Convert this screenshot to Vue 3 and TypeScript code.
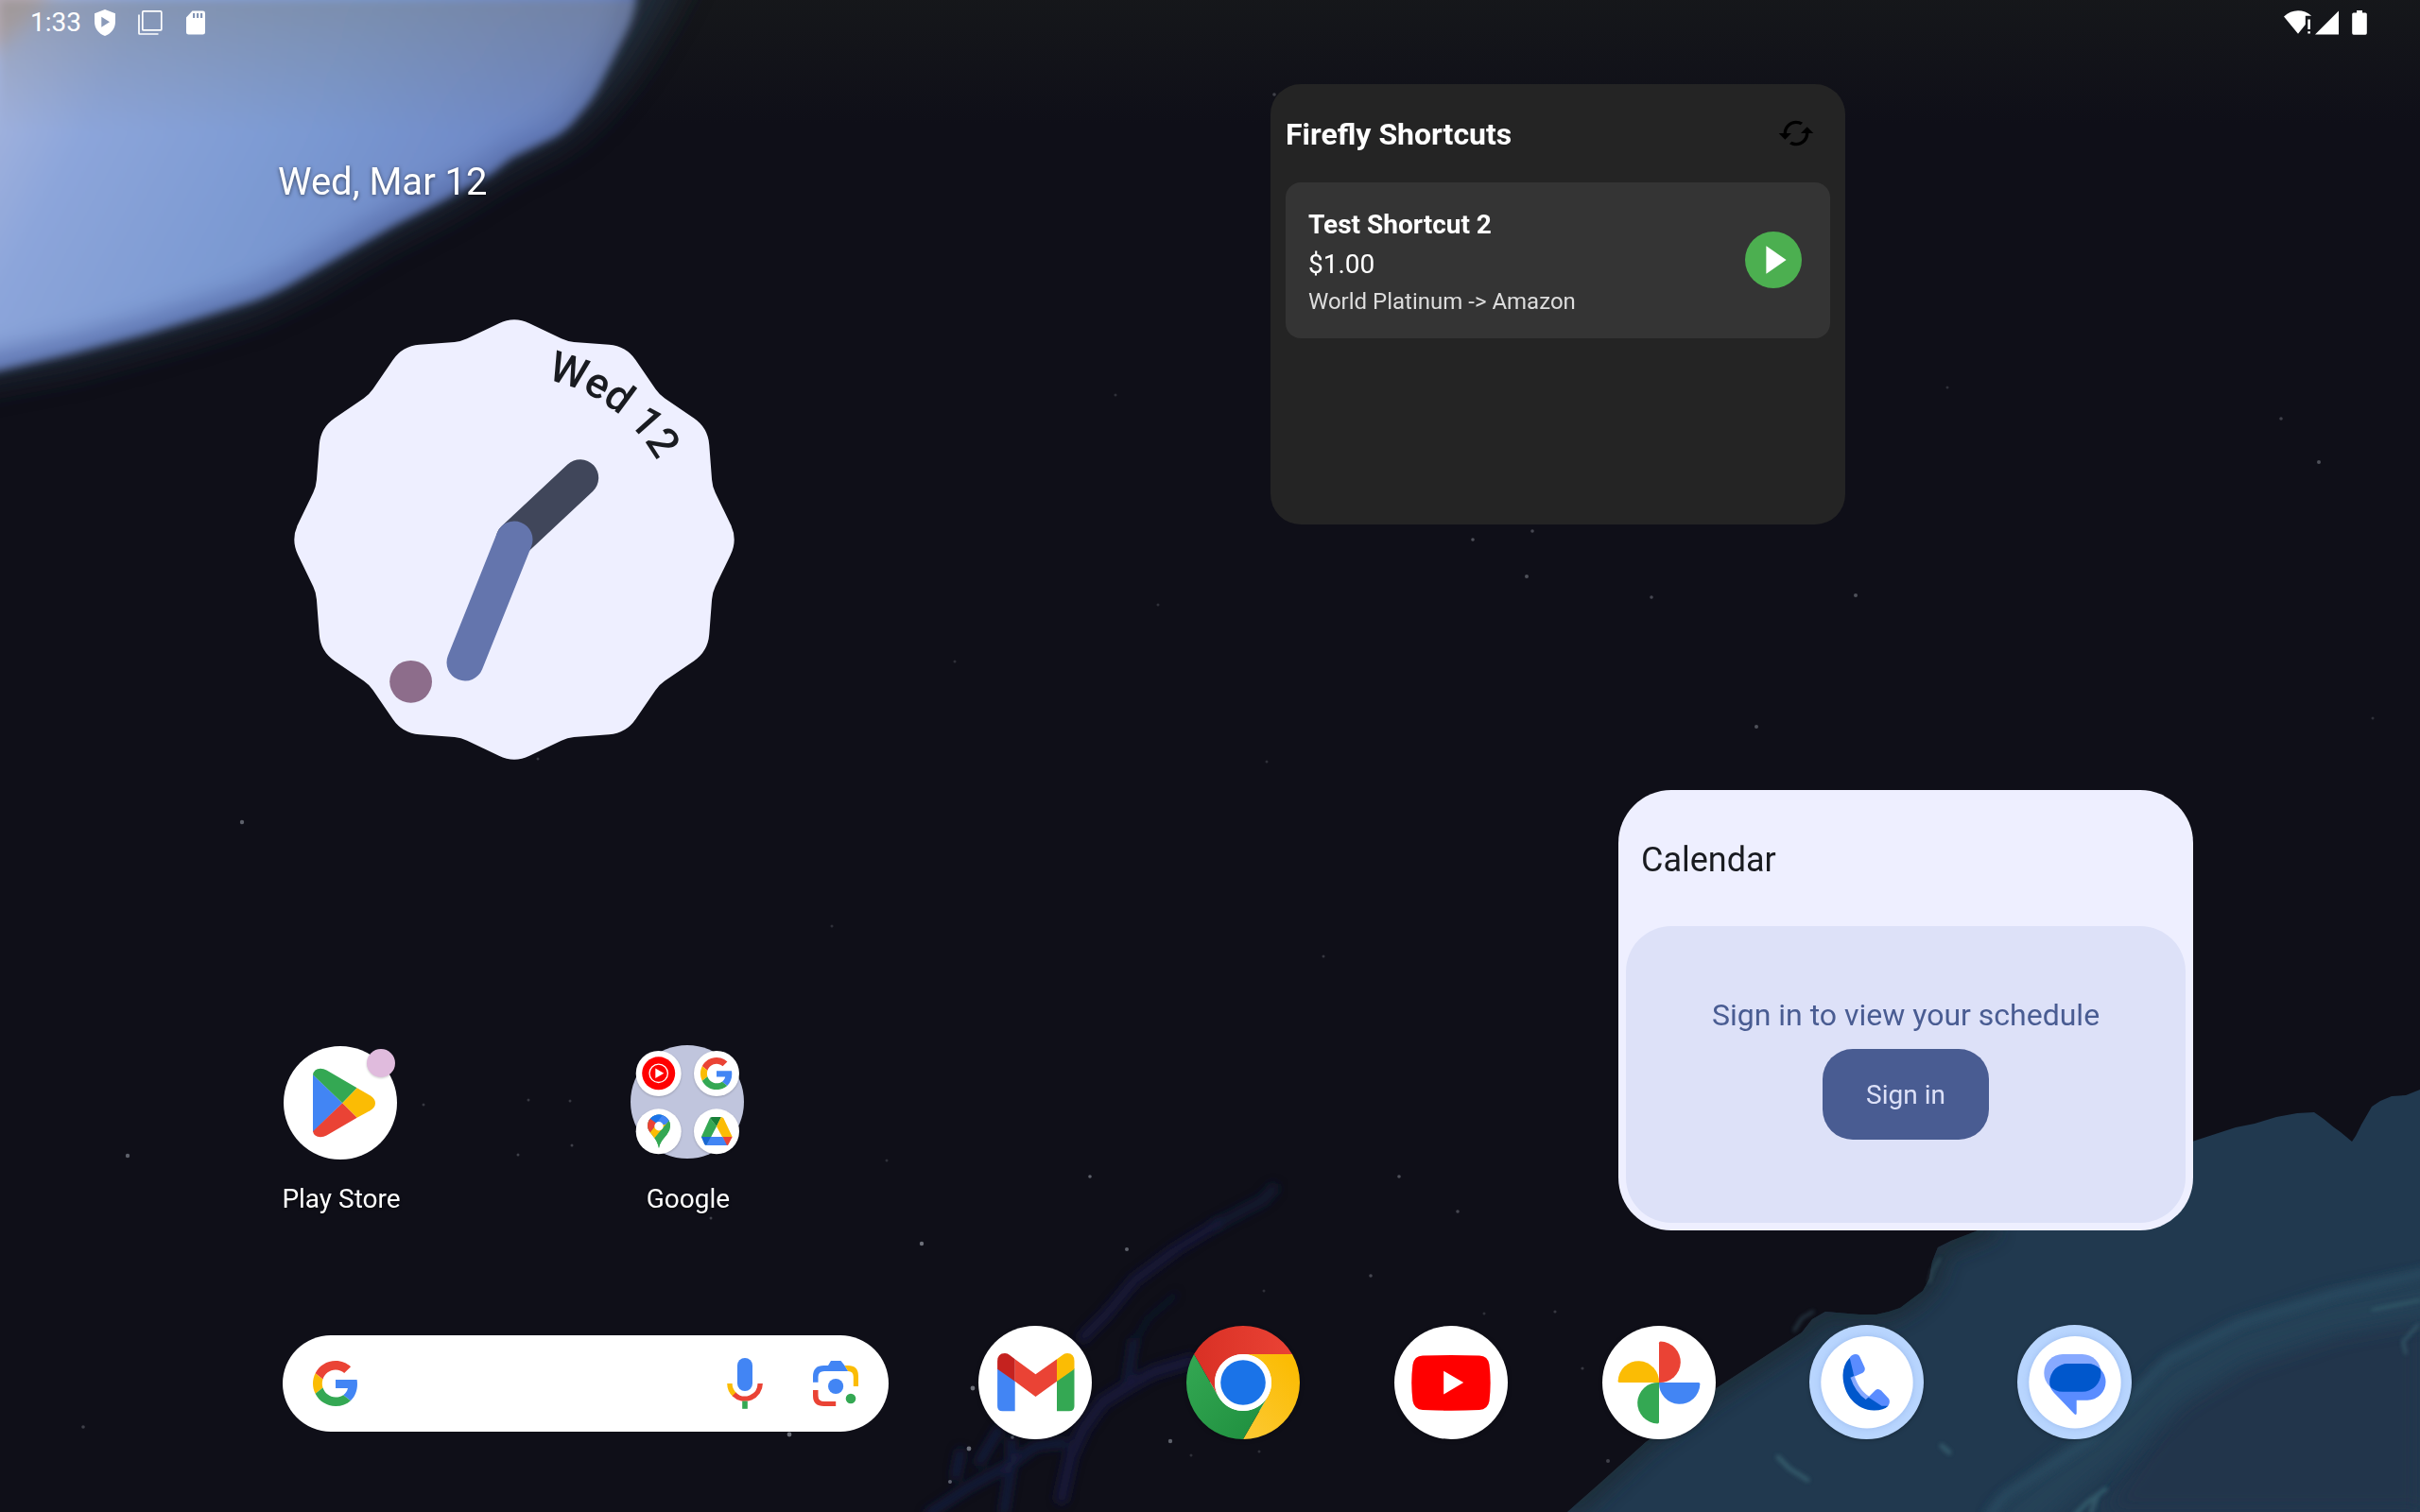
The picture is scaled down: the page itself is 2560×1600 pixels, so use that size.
<script setup lang="ts">
interface Star {
  x: number
  y: number
  r: number
  o: number
}

const stars: Star[] = (
  [
    [1153, 1245, 1.8, 0.5], [975, 1316, 2.2, 0.6], [1192, 1322, 2, 0.5], [1480, 1245, 1.8, 0.4],
    [1542, 1282, 1.8, 0.35], [1450, 1350, 1.8, 0.35], [1029, 1469, 2.4, 0.6], [1025, 1533, 2.4, 0.6],
    [1005, 1568, 2, 0.5], [1238, 1525, 2.2, 0.5], [1071, 1521, 1.8, 0.4], [835, 1518, 2.4, 0.6],
    [256, 870, 2.2, 0.5], [135, 1223, 2.2, 0.5], [1558, 571, 1.8, 0.4], [1615, 610, 2, 0.4],
    [1747, 632, 1.8, 0.35], [1963, 630, 2, 0.4], [1858, 769, 2, 0.4], [2453, 489, 2, 0.4],
    [2413, 443, 1.8, 0.3], [1621, 562, 1.8, 0.35], [1337, 1366, 1.5, 0.2], [1570, 1390, 1.5, 0.2],
    [448, 1169, 1.5, 0.25], [559, 1164, 1.5, 0.25], [603, 1165, 1.5, 0.25], [605, 1212, 1.5, 0.3],
    [548, 1222, 1.5, 0.3], [752, 1289, 1.5, 0.3], [938, 1228, 1.5, 0.2], [1180, 418, 1.5, 0.2],
    [1225, 640, 1.5, 0.2], [1010, 700, 1.5, 0.2], [1340, 806, 1.5, 0.2], [1400, 1012, 1.5, 0.25],
    [880, 980, 1.5, 0.2], [1348, 100, 1.8, 0.3], [569, 803, 1.5, 0.25], [88, 1510, 1.8, 0.3],
    [1332, 1536, 1.5, 0.2], [1260, 1540, 1.5, 0.2], [2060, 410, 1.5, 0.2], [2510, 760, 1.5, 0.2],
    [1645, 1388, 1.6, 0.25], [1674, 1448, 1.6, 0.25], [1701, 1546, 2, 0.3]
  ] as number[][]
).map(([x, y, r, o]) => ({ x, y, r, o }))

// Twelve-lobed clock face: a star polygon with softened tips and notches.
function facePath(): string {
  const c = 234
  const pts: [number, number][] = []
  for (let i = 0; i < 24; i++) {
    const r = i % 2 ? 217 : 236.6
    const a = (i * 15 * Math.PI) / 180
    pts.push([c + r * Math.sin(a), c - r * Math.cos(a)])
  }
  const toward = (a: [number, number], b: [number, number], d: number) => {
    const l = Math.hypot(b[0] - a[0], b[1] - a[1])
    return `${(a[0] + ((b[0] - a[0]) * d) / l).toFixed(2)} ${(a[1] + ((b[1] - a[1]) * d) / l).toFixed(2)}`
  }
  let d = ''
  pts.forEach((p, i) => {
    const t = i % 2 ? 7 : 18
    const prev = pts[(i + 23) % 24]
    const next = pts[(i + 1) % 24]
    d += `${i ? 'L' : 'M'}${toward(p, prev, t)} Q${p[0].toFixed(2)} ${p[1].toFixed(2)} ${toward(p, next, t)} `
  })
  return d + 'Z'
}

const face = facePath()
const petals = [
  { color: '#ea4335', turn: 0 },
  { color: '#4285f4', turn: 90 },
  { color: '#34a853', turn: 180 },
  { color: '#fbbc04', turn: 270 }
]
const shortcuts = [{ name: 'Test Shortcut 2', amount: '$1.00', route: 'World Platinum -> Amazon' }]
</script>

<template>
  <div class="screen">
    <svg class="wallpaper" viewBox="0 0 2560 1600" aria-hidden="true">
      <defs>
        <linearGradient id="sky" gradientUnits="userSpaceOnUse" x1="-10" y1="70" x2="470" y2="320">
          <stop offset="0" stop-color="#a6b5de" />
          <stop offset=".22" stop-color="#8ca5da" />
          <stop offset=".6" stop-color="#7b99d2" />
          <stop offset="1" stop-color="#6d87c5" />
        </linearGradient>
        <linearGradient id="scrim" x1="0" y1="0" x2="0" y2="1">
          <stop offset="0" stop-color="#77776a" stop-opacity=".36" />
          <stop offset="1" stop-color="#77776a" stop-opacity="0" />
        </linearGradient>
        <linearGradient id="night" x1="0" y1="0" x2="0" y2="1">
          <stop offset="0" stop-color="#17191b" />
          <stop offset="1" stop-color="#17191b" stop-opacity="0" />
        </linearGradient>
        <filter id="b2" x="-10%" y="-10%" width="120%" height="120%"><feGaussianBlur stdDeviation="2" /></filter>
        <filter id="b4" x="-20%" y="-20%" width="140%" height="140%"><feGaussianBlur stdDeviation="4" /></filter>
        <filter id="b6" x="-20%" y="-20%" width="140%" height="140%"><feGaussianBlur stdDeviation="5" /></filter>
        <filter id="b8" x="-20%" y="-20%" width="140%" height="140%"><feGaussianBlur stdDeviation="10" /></filter>
        <filter id="b18" x="-20%" y="-20%" width="140%" height="140%"><feGaussianBlur stdDeviation="18" /></filter>
        <clipPath id="blobClip">
          <path d="M-60 -60H676L673 0Q670 22 658 43L638 83Q628 105 612 122Q602 136 587 145L541 167L520 184L469 212L418 238L367 267L316 296Q296 308 270 318L219 334L153 354L77 374L0 392L-60 402Z" />
        </clipPath>
        <clipPath id="landClip">
          <path d="M2560 1153L2545 1159L2530 1160L2518 1165L2509 1171L2498 1190L2492 1202L2488 1208L2476 1198L2469 1193L2458 1184L2448 1177L2430 1178L2408 1182L2385 1189L2365 1193L2322 1207L2200 1250L2090 1303L2064 1313L2050 1320L2044 1335L2041 1353L2034 1366L2022 1375L2010 1384L1998 1388L1985 1391L1967 1391L1931 1388L1917 1396L1906 1410L1860 1440L1814 1470L1780 1498L1741 1526L1692 1570L1658 1600H2560Z" />
        </clipPath>
      </defs>
      <rect width="2560" height="1600" fill="#0f0f18" />
      <rect width="2560" height="130" fill="url(#night)" opacity=".8" />
      <path d="M-60 -60H735L712 0L670 70L630 120L595 150L540 178L480 216L400 258L330 300L270 330L180 358L80 386L-60 412Z" fill="#232d3d" filter="url(#b18)" opacity=".9" />
      <g filter="url(#b6)">
        <g clip-path="url(#blobClip)">
          <rect x="-60" y="-60" width="760" height="480" fill="url(#sky)" />
          <path d="M676 -40L673 0L658 43L638 83L612 122L587 145L541 166L520 182L469 209L418 235L367 265L316 295L270 317L219 332L153 352L77 372L-40 396" fill="none" stroke="#5a70ac" stroke-width="34" filter="url(#b8)" opacity=".8" />
          <path d="M-40 -40H66L40 14L0 50L-40 70Z" fill="#b5aab4" filter="url(#b8)" />
          <rect width="700" height="140" fill="url(#scrim)" />
        </g>
      </g>

      <g fill="none" stroke="#161b3c" stroke-linecap="round" stroke-linejoin="round" filter="url(#b6)">
        <path d="M1347 1258L1336 1270L1288 1295" stroke-width="13" opacity=".6" />
        <path d="M1288 1295L1244 1322L1200 1355L1171 1390L1146 1415" stroke-width="12" opacity=".9" />
        <path d="M1244 1370L1215 1395L1203 1415L1195 1450" stroke-width="4" opacity=".7" />
        <path d="M1260 1440L1220 1452L1193 1467L1166 1484L1146 1512L1133 1540L1123 1585" stroke-width="14" opacity=".9" />
        <path d="M1199 1420L1193 1460" stroke-width="8" />
        <path d="M1057 1512L1036 1547M1125 1527L1096 1530L1070 1549L1026 1573L982 1602M1016 1537L1011 1562M1070 1525V1550L1062 1600" stroke-width="9" />
      </g>

      <g clip-path="url(#landClip)">
        <rect x="1600" y="1100" width="960" height="500" fill="#21394f" />
        <path d="M2110 1295L2090 1303L2050 1320L2041 1353L2022 1373L1998 1387L1967 1391L1931 1388L1906 1410L1814 1470L1741 1523L1658 1600" fill="none" stroke="#1d2a35" stroke-width="26" filter="url(#b8)" opacity=".8" />
        <path d="M2560 1390L2469 1408L2371 1440L2300 1490L2225 1600H2560Z" fill="#23364c" filter="url(#b8)" />
        <path d="M2580 1372L2469 1392L2371 1424L2300 1464L2240 1520L2190 1560L2120 1620" fill="none" stroke="#25445a" stroke-width="42" filter="url(#b8)" opacity=".75" />
        <path d="M2580 1342L2560 1348L2469 1370L2371 1400L2292 1440L2261 1473L2212 1523L2120 1583L2100 1610" fill="none" stroke="#2b4d63" stroke-width="9" filter="url(#b6)" opacity=".9" />
        <g fill="none" stroke="#37616f" stroke-linecap="round" filter="url(#b2)" opacity=".8">
          <path d="M1881 1542L1893 1554L1912 1566" stroke-width="5" />
          <path d="M2054 1530L2062 1537" stroke-width="5" />
          <path d="M2227 1576L2208 1590L2192 1606M2218 1585L2212 1600" stroke-width="5" />
          <path d="M2558 1402L2542 1420L2545 1432" stroke-width="3" />
          <path d="M2510 1386L2560 1376" stroke-width="3" />
        </g>
      </g>
      <g fill="none" stroke="#375362" stroke-width="2.500" stroke-linecap="round" opacity=".8" filter="url(#b2)">
        <path d="M2052 1332L2044 1345L2041 1357M1898 1408L1906 1395L1918 1388" />
      </g>
      <circle v-for="(s, i) in stars" :key="i" :cx="s.x" :cy="s.y" :r="s.r" :opacity="s.o" fill="#aeb3bd" />
    </svg>

    <header class="status">
      <span class="time">1:33</span>
      <svg class="s-shield" width="24" height="30" viewBox="0 0 24 30">
        <path fill="#fff" fill-rule="evenodd" d="M12 1L23 5.2V14C23 21 18.6 26.700 12 29C5.400 26.700 1 21 1 14V5.200ZM8.300 8.800V19.800L17 14.300Z" />
      </svg>
      <svg class="s-copy" width="28" height="28" viewBox="0 0 28 28" fill="none" stroke="#fff" stroke-width="1.700">
        <rect x="5.800" y="1.900" width="20" height="20" rx="1" />
        <path d="M2 5.500V25.300Q2 26 2.800 26H22.500" />
      </svg>
      <svg class="s-sd" width="22" height="26" viewBox="0 0 22 26">
        <path fill="#fff" fill-rule="evenodd" d="M7.500 .6H18.500Q21 .6 21 3V23.200Q21 25.600 18.500 25.600H3.500Q1 25.600 1 23.200V7.400ZM8 3V8H10.200V3ZM12 3V8H14.200V3ZM16 3V8H18.200V3Z" />
      </svg>
      <div class="status-right">
        <svg width="32" height="28" viewBox="0 0 32 28" fill="#fff">
          <path d="M1 7.500C5.500 3.200 10.500 1.200 16 1.200C21 1.200 26 3 30.200 6.700H23.800V16L16 25.700Z" />
          <path d="M26.300 10.500H28.900V21H26.300ZM26.300 23.200H28.900V25.600H26.300Z" />
        </svg>
        <svg class="s-signal" width="26" height="28" viewBox="0 0 26 28"><path fill="#fff" d="M25 1.600V26.600H0Z" /></svg>
        <svg class="s-battery" width="16" height="28" viewBox="0 0 16 28">
          <path fill="#fff" d="M5 1H11V3.500H14.300Q15.800 3.500 15.800 5V25Q15.800 26.700 14.300 26.700H1.700Q.2 26.700 .2 25V5Q.2 3.500 1.700 3.500H5Z" />
        </svg>
      </div>
    </header>

    <main class="workspace">
      <section class="left">
        <div class="date">Wed, Mar 12</div>
        <svg class="clock" width="468" height="468" viewBox="0 0 468 468">
          <defs><path id="dateArc" d="M61.500 234A172.500 172.500 0 0 1 406.500 234" /></defs>
          <path :d="face" fill="#eeefff" />
          <text class="dial"><textPath href="#dateArc" startOffset="305">Wed 12</textPath></text>
          <g fill="none" stroke-width="39" stroke-linecap="round">
            <path d="M234 234L303.700 168.700" stroke="#40465a" />
            <path d="M234 234L182 364" stroke="#6475ad" />
          </g>
          <circle cx="124.600" cy="384.300" r="22.400" fill="#8d6d8b" />
        </svg>
        <div class="apps">
          <div class="app">
            <svg width="120" height="122" viewBox="0 -1 120 122">
              <circle cx="60" cy="60" r="60" fill="#fff" />
              <path d="M31 30L62.200 60.300L31 91Z" fill="#4285f4" />
              <path d="M31 30.300Q32 24 39 23.700Q42.500 23.700 45.500 25.600L77.700 44.300L62.200 60.300Z" fill="#34a853" />
              <path d="M77.700 44.300L91.500 52.200Q97 55.500 97 60.300Q97 65 91.500 68.300L77.700 75.800L62.200 60.300Z" fill="#fbbc04" />
              <path d="M31 90.300Q32 96 39 96.300Q42.500 96.300 45.500 94.500L77.700 75.800L62.200 60.300Z" fill="#ea4335" />
              <circle class="badge" cx="103" cy="18" r="15" fill="#e0bbdd" />
            </svg>
            <span>Play Store</span>
          </div>
          <div class="app">
            <svg width="120" height="122" viewBox="0 0 120 122">
              <circle cx="60" cy="60" r="60" fill="#c0c5dd" />
              <g class="minis" fill="#fff">
                <circle cx="29.700" cy="30" r="24" /><circle cx="91" cy="30" r="24" />
                <circle cx="29.700" cy="91.300" r="24" /><circle cx="91" cy="91.300" r="24" />
              </g>
              <circle cx="29.700" cy="29.800" r="17.500" fill="#f00" />
              <circle cx="29.700" cy="29.800" r="9.700" fill="none" stroke="#fff" stroke-width="1.300" />
              <path d="M26.300 24.600L35.300 29.800L26.300 35Z" fill="#fff" />
              <svg x="74" y="12.500" width="34" height="35" viewBox="0 0 48 48">
                <path fill="#ea4335" d="M24 9.500c3.540 0 6.710 1.220 9.210 3.600l6.850-6.850C35.900 2.380 30.470 0 24 0 14.620 0 6.510 5.380 2.560 13.220l7.980 6.190C12.430 13.720 17.740 9.500 24 9.500z" />
                <path fill="#4285f4" d="M46.980 24.550c0-1.570-.15-3.090-.38-4.550H24v9.020h12.940c-.58 2.960-2.260 5.480-4.780 7.180l7.730 6c4.510-4.180 7.090-10.360 7.090-17.650z" />
                <path fill="#fbbc04" d="M10.530 28.590c-.48-1.450-.76-2.990-.76-4.590s.27-3.140.76-4.590l-7.980-6.190C.92 16.460 0 20.120 0 24c0 3.880.92 7.540 2.560 10.780l7.970-6.190z" />
                <path fill="#34a853" d="M24 48c6.480 0 11.930-2.130 15.890-5.810l-7.730-6c-2.150 1.450-4.920 2.300-8.160 2.300-6.260 0-11.570-4.220-13.470-9.910l-7.980 6.190C6.510 42.620 14.620 48 24 48z" />
              </svg>
              <clipPath id="pin"><path d="M30 109C28.500 102 26 99 22.500 94.500Q18 89.500 18 85.500A12 12 0 0 1 42 85.500Q42 90 38.500 94.500C34.500 99.500 31.500 102 30 109Z" /></clipPath>
              <g clip-path="url(#pin)">
                <rect x="16" y="72" width="28" height="38" fill="#34a853" />
                <path d="M16 70H44V78L30 85.500Z" fill="#4285f4" />
                <path d="M16 68H36L34 75L26 85L16 78Z" fill="#1a73e8" />
                <path d="M34.300 73.500L42 79L34 90L27 83Z" fill="#4285f4" />
                <path d="M16 72L21 78L28 83L19 95H16Z" fill="#ea4335" />
                <path d="M19.500 94L27 84.500L37 84L41 80L24.500 99.500L20 97Z" fill="#fbbc04" />
                <path d="M41.500 79L24.500 99.500L30 112L46 90Z" fill="#34a853" />
              </g>
              <circle cx="30" cy="85.700" r="4.700" fill="#fff" />
              <path d="M84 77L74.900 97L80.500 106L91 86Z" fill="#34a853" />
              <path d="M84 77Q85 76 86.500 76H96L91 86Z" fill="#188038" />
              <path d="M96 76Q97.500 76 98.500 77.500L107.700 97H97L91 86Z" fill="#fbbc04" />
              <path d="M84.500 97H97.500L103 106H80Z" fill="#4285f4" />
              <path d="M74.900 97H85L80 106Q79 106 78 104.500Z" fill="#1967d2" />
              <path d="M97.500 97H107.700L103.800 104.500Q103.300 106 102 106Z" fill="#ea4335" />
            </svg>
            <span>Google</span>
          </div>
        </div>
      </section>

      <section class="right">
        <article class="firefly">
          <div class="ff-head">
            <h1>Firefly Shortcuts</h1>
            <svg width="40" height="40" viewBox="0 0 24 24">
              <path d="M19 8l-4 4h3c0 3.310-2.690 6-6 6-1.010 0-1.970-.25-2.800-.7l-1.460 1.460C8.970 19.540 10.430 20 12 20c4.420 0 8-3.580 8-8h3l-4-4zM6 12c0-3.310 2.690-6 6-6 1.010 0 1.970.25 2.800.7l1.460-1.460C15.030 4.460 13.570 4 12 4c-4.420 0-8 3.580-8 8H1l4 4 4-4H6z" />
            </svg>
          </div>
          <div v-for="s in shortcuts" :key="s.name" class="ff-item">
            <div class="ff-text">
              <h2>{{ s.name }}</h2>
              <p class="amount">{{ s.amount }}</p>
              <p class="route">{{ s.route }}</p>
            </div>
            <svg width="60" height="60" viewBox="0 0 60 60">
              <circle cx="30" cy="30" r="30" fill="#4caf50" />
              <path d="M22.400 15.200L43.600 30L22.400 44.800Z" fill="#fff" />
            </svg>
          </div>
        </article>

        <article class="calendar">
          <div class="cal-title">Calendar</div>
          <div class="cal-body">
            <p>Sign in to view your schedule</p>
            <button type="button">Sign in</button>
          </div>
        </article>
      </section>
    </main>

    <footer class="dock">
      <div class="search">
        <svg width="48" height="48" viewBox="0 0 48 48">
          <path fill="#ea4335" d="M24 9.500c3.540 0 6.710 1.220 9.210 3.600l6.850-6.850C35.900 2.380 30.470 0 24 0 14.620 0 6.510 5.380 2.560 13.220l7.980 6.190C12.430 13.720 17.740 9.500 24 9.500z" />
          <path fill="#4285f4" d="M46.980 24.550c0-1.570-.15-3.090-.38-4.550H24v9.020h12.940c-.58 2.960-2.260 5.480-4.780 7.180l7.730 6c4.510-4.180 7.090-10.360 7.090-17.650z" />
          <path fill="#fbbc04" d="M10.530 28.590c-.48-1.450-.76-2.990-.76-4.590s.27-3.140.76-4.590l-7.980-6.190C.92 16.460 0 20.120 0 24c0 3.880.92 7.540 2.560 10.780l7.970-6.190z" />
          <path fill="#34a853" d="M24 48c6.480 0 11.930-2.130 15.890-5.810l-7.730-6c-2.150 1.450-4.920 2.300-8.160 2.300-6.260 0-11.570-4.220-13.470-9.910l-7.980 6.190C6.510 42.620 14.620 48 24 48z" />
        </svg>
        <svg class="mic" width="40" height="56" viewBox="0 0 40 56">
          <rect x="12" y="1" width="16" height="35" rx="8" fill="#4285f4" />
          <path d="M3.900 28A16.200 16.200 0 0 0 9.200 40" fill="none" stroke="#fbbc04" stroke-width="5.400" />
          <path d="M8.500 39.300A16.200 16.200 0 0 0 36.200 28" fill="none" stroke="#ea4335" stroke-width="5.400" />
          <rect x="17.200" y="46.600" width="5.600" height="8.200" fill="#34a853" />
        </svg>
        <svg class="lens" width="48" height="48" viewBox="0 0 48 48">
          <path d="M0 22.700V16.500Q0 5 11.500 5H16L19 0H29.500L33.500 5L37.200 11H12Q5.500 11 5.500 17V22.700Z" fill="#4285f4" />
          <path d="M33.500 5H37Q48 5 48 16V27H42.800V17Q42.800 11 37.200 11Z" fill="#fbbc04" />
          <path d="M0 31H5.500V37Q5.500 43 12 43H24.200V48H11.500Q0 48 0 37Z" fill="#ea4335" />
          <circle cx="24.100" cy="27" r="8.100" fill="#4285f4" />
          <circle cx="40" cy="40" r="5.300" fill="#34a853" />
        </svg>
      </div>

      <div class="dock-icons">
        <svg viewBox="0 0 120 120">
          <circle cx="60" cy="60" r="60" fill="#fff" />
          <path d="M20.100 45L38.700 58V90.300H25.500Q20.100 90.300 20.100 85Z" fill="#4285f4" />
          <path d="M101.500 45L83 58V90.300H96Q101.500 90.300 101.500 85Z" fill="#34a853" />
          <path d="M38.700 35.300L60.500 51.300L83 35.300V58.700L60.500 75L38.700 58.700Z" fill="#ea4335" />
          <path d="M38.700 35.300V58.700L20.100 45.700V37.500Q20.100 29 28 29Q31 29 33.500 31.200Z" fill="#c5221f" />
          <path d="M83 35.300V58.700L101.500 45.700V37.500Q101.500 29 94 29Q91 29 88.500 31.200Z" fill="#fbbc04" />
        </svg>
        <svg viewBox="0 0 120 120">
          <defs>
            <linearGradient id="cr" x1="0" x2="1"><stop offset="0" stop-color="#d93025" /><stop offset="1" stop-color="#ea4335" /></linearGradient>
            <linearGradient id="cg" x1="0" y1="0" x2="1" y2="1"><stop offset="0" stop-color="#34a853" /><stop offset="1" stop-color="#1e8e3e" /></linearGradient>
            <linearGradient id="cy" x1="0" y1="1" x2=".7" y2="0"><stop offset="0" stop-color="#fcc934" /><stop offset="1" stop-color="#fbbc04" /></linearGradient>
          </defs>
          <circle cx="60" cy="60" r="35" fill="#fff" />
          <path d="M8.040 30A60 60 0 0 1 111.960 30H60A30 30 0 0 0 34.020 75Z" fill="url(#cr)" />
          <path d="M111.960 30A60 60 0 0 1 60 120L85.980 75A30 30 0 0 0 60 30Z" fill="url(#cy)" />
          <path d="M60 120A60 60 0 0 1 8.040 30L34.020 75A30 30 0 0 0 85.980 75Z" fill="url(#cg)" />
          <circle cx="60" cy="60" r="30" fill="#fff" />
          <circle cx="60" cy="60" r="23.800" fill="#1a73e8" />
        </svg>
        <svg viewBox="0 0 120 120">
          <circle cx="60" cy="60" r="60" fill="#fff" />
          <path d="M30 31.600Q60 30.400 90 31.600Q99 32 100.500 41Q102.800 60 100.500 79.500Q99 88.500 90 89Q60 90.300 30 89Q21 88.500 19.500 79.500Q17 60 19.500 41Q21 32 30 31.600Z" fill="#f00" />
          <path d="M52.200 47.700L73.200 60.100L52.200 72.500Z" fill="#fff" />
        </svg>
        <svg viewBox="0 0 120 120">
          <circle cx="60" cy="60" r="60" fill="#fff" />
          <path v-for="p in petals" :key="p.turn" :fill="p.color" :transform="`rotate(${p.turn} 60 60)`" d="M60 18.200Q60 16.600 61.600 16.600A22 21.700 0 0 1 60 60Z" />
        </svg>
        <svg viewBox="0 0 120 120">
          <circle cx="59.500" cy="59.500" r="60.500" fill="#b8d5fe" />
          <circle class="disc" cx="60" cy="59.800" r="48.700" fill="#fff" />
          <path d="M42 53L46.500 52.500C50 63 55 70 62.500 74.800L58.700 79C49 72 44 64 42 53Z" fill="#87a9ff" />
          <path d="M41.700 33.700Q44 30 48 30Q51.200 30 52.600 33.200L57.600 44.200Q58.500 47.500 55.500 49.700L46.500 53.800L42 42Z" fill="#5a8cff" />
          <path d="M61.500 75.500L69 68Q72 65.500 75 68.600L83 77Q85 80.500 82.500 84.500Q78 88 74 86.500Z" fill="#5a8cff" />
          <path d="M41.700 33.700L46.300 53L42.500 54.700Q47.500 70 58.700 78L61.500 75.500L75.500 84.700H82.500Q78 89.400 67.400 89.400C49 89.400 34.500 73 34.500 52Q34.800 41 41.700 33.700Z" fill="#0057cc" />
        </svg>
        <svg viewBox="0 0 120 120">
          <defs>
            <clipPath id="pill"><rect x="27.300" y="30" width="60.200" height="39.700" rx="19.800" /></clipPath>
          </defs>
          <circle cx="59.500" cy="59.500" r="60.500" fill="#b8d5fe" />
          <circle class="disc" cx="60" cy="59.800" r="48.700" fill="#fff" />
          <rect x="27.300" y="30" width="60.200" height="39.700" rx="19.800" fill="#87a9ff" />
          <path d="M53 40H73.200A19.300 19.300 0 0 1 73.200 78.700H61.700V93Q61 95 59.300 93.300L37.500 70.500Q33.200 66 33.200 59.500A19.500 19.500 0 0 1 53 40Z" fill="#5a8cff" />
          <path clip-path="url(#pill)" d="M53 40H73.200A19.300 19.300 0 0 1 73.200 78.700H61.700V93Q61 95 59.300 93.300L37.500 70.500Q33.200 66 33.200 59.500A19.500 19.500 0 0 1 53 40Z" fill="#0057cc" />
        </svg>
      </div>
    </footer>
  </div>
</template>

<style>
body {
  margin: 0;
  background: #0f0f18;
}
</style>

<style scoped>
.screen {
  position: relative;
  display: flex;
  flex-direction: column;
  width: 2560px;
  height: 1600px;
  overflow: hidden;
  font-family: Roboto, sans-serif;
  color: #fff;
}
.wallpaper {
  position: absolute;
  inset: 0;
  width: 2560px;
  height: 1600px;
}
svg {
  display: block;
  flex: none;
}
h1,
h2,
p {
  margin: 0;
}
.status,
.workspace,
.dock {
  position: relative;
}
.status {
  display: flex;
  align-items: flex-start;
  box-sizing: border-box;
  height: 48px;
  padding: 7px 56px 0 32px;
}
.time {
  width: 67px;
  font-size: 28px;
  line-height: 33px;
}
.s-shield {
  margin-top: 2px;
}
.s-copy {
  margin: 3px 0 0 22px;
}
.s-sd {
  margin: 4px 0 0 23px;
}
.status-right {
  display: flex;
  margin: 3px 0 0 auto;
}
.s-signal {
  margin-left: 2px;
}
.s-battery {
  margin-left: 13px;
}
.workspace {
  display: flex;
  height: 1354px;
  padding-left: 294px;
}
.left {
  width: 1050px;
  padding-top: 121px;
}
.date {
  font-size: 40px;
  line-height: 48px;
  text-shadow: 0 1px 4px rgba(0, 0, 0, 0.55);
}
.clock {
  margin: 120px 0 0 16px;
}
.dial {
  font-size: 45px;
  font-weight: 500;
  letter-spacing: -0.2px;
  fill: #191b20;
}
.apps {
  display: flex;
  gap: 167px;
  margin-top: 301px;
  margin-left: -34px;
}
.app {
  display: flex;
  flex-direction: column;
  align-items: center;
  width: 200px;
  font-size: 28px;
  line-height: 33px;
  text-shadow: 0 1px 3px rgba(0, 0, 0, 0.8);
}
.app span {
  margin: 24px 0 0 2px;
}
.badge,
.minis {
  filter: drop-shadow(0 1px 1px rgba(0, 0, 0, 0.2));
}
.right {
  padding-top: 41px;
}
.firefly {
  box-sizing: border-box;
  width: 608px;
  height: 466px;
  padding: 16px;
  border-radius: 32px;
  background: #242424;
}
.ff-head {
  display: flex;
  align-items: center;
  justify-content: space-between;
  height: 72px;
  padding-right: 16px;
  margin-bottom: 16px;
}
.ff-head h1 {
  padding-top: 2px;
  font-size: 32px;
  line-height: 38px;
  font-weight: 700;
}
.ff-item {
  display: flex;
  align-items: flex-start;
  justify-content: space-between;
  box-sizing: border-box;
  height: 165px;
  padding: 0 30px 0 24px;
  border-radius: 16px;
  background: #343434;
}
.ff-text {
  padding-top: 28px;
}
.ff-item svg {
  margin-top: 52px;
}
.ff-item h2,
.amount {
  font-size: 28px;
  line-height: 33px;
}
.ff-item h2 {
  font-weight: 700;
}
.amount {
  margin-top: 9px;
}
.route {
  margin-top: 9px;
  font-size: 24px;
  line-height: 28px;
  color: #ddd;
}
.calendar {
  display: flex;
  flex-direction: column;
  box-sizing: border-box;
  width: 608px;
  height: 466px;
  margin: 281px 0 0 368px;
  padding: 8px;
  border-radius: 56px;
  background: #eeefff;
}
.cal-title {
  box-sizing: border-box;
  height: 136px;
  padding: 45px 0 0 16px;
  font-size: 36px;
  line-height: 42px;
  color: #191b20;
}
.cal-body {
  display: flex;
  flex: 1;
  flex-direction: column;
  align-items: center;
  padding-top: 75px;
  border-radius: 48px;
  background: #dde1f8;
}
.cal-body p {
  font-size: 32px;
  line-height: 38px;
  color: #495c92;
}
.cal-body button {
  width: 176px;
  height: 96px;
  margin-top: 17px;
  padding: 1px 0 0;
  border: 0;
  border-radius: 32px;
  background: #495c92;
  font: 400 28px/33px Roboto, sans-serif;
  color: #dde1f8;
}
.dock {
  display: flex;
  align-items: flex-start;
  padding-left: 299px;
}
.search {
  display: flex;
  align-items: center;
  box-sizing: border-box;
  width: 641px;
  height: 102px;
  margin: 11px 95px 0 0;
  padding: 0 32px;
  border-radius: 51px;
  background: #fff;
}
.mic {
  margin-left: auto;
}
.lens {
  margin-left: 52px;
}
.dock-icons {
  display: flex;
  gap: 100px;
  margin-top: 1px;
}
.dock-icons svg {
  width: 120px;
  height: 120px;
  overflow: visible;
  filter: drop-shadow(0 1px 2px rgba(0, 0, 0, 0.25));
}
.disc {
  filter: drop-shadow(0 0 3px rgba(70, 110, 190, 0.25));
}
</style>
